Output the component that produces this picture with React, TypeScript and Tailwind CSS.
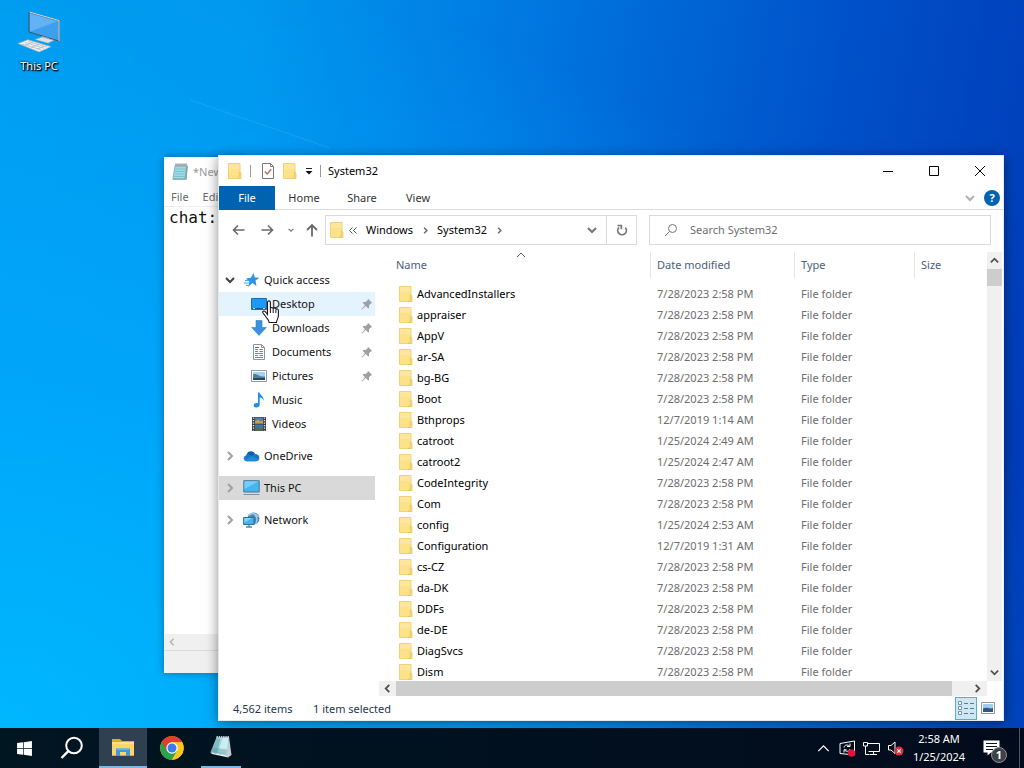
import { useState } from "react";
import type { ReactNode } from "react";
import { FaWindows } from "react-icons/fa";

const files = [
  { name: "AdvancedInstallers", date: "7/28/2023 2:58 PM" },
  { name: "appraiser", date: "7/28/2023 2:58 PM" },
  { name: "AppV", date: "7/28/2023 2:58 PM" },
  { name: "ar-SA", date: "7/28/2023 2:58 PM" },
  { name: "bg-BG", date: "7/28/2023 2:58 PM" },
  { name: "Boot", date: "7/28/2023 2:58 PM" },
  { name: "Bthprops", date: "12/7/2019 1:14 AM" },
  { name: "catroot", date: "1/25/2024 2:49 AM" },
  { name: "catroot2", date: "1/25/2024 2:47 AM" },
  { name: "CodeIntegrity", date: "7/28/2023 2:58 PM" },
  { name: "Com", date: "7/28/2023 2:58 PM" },
  { name: "config", date: "1/25/2024 2:53 AM" },
  { name: "Configuration", date: "12/7/2019 1:31 AM" },
  { name: "cs-CZ", date: "7/28/2023 2:58 PM" },
  { name: "da-DK", date: "7/28/2023 2:58 PM" },
  { name: "DDFs", date: "7/28/2023 2:58 PM" },
  { name: "de-DE", date: "7/28/2023 2:58 PM" },
  { name: "DiagSvcs", date: "7/28/2023 2:58 PM" },
  { name: "Dism", date: "7/28/2023 2:58 PM" },
];

/* ---------- icons ---------- */

function Chevron({ dir, size = 10, className = "text-[#505050]", width = 2 }: { dir: "up" | "down" | "left" | "right"; size?: number; className?: string; width?: number }) {
  const paths = {
    up: "M1 7l4-4 4 4",
    down: "M1 3l4 4 4-4",
    left: "M7 1L3 5l4 4",
    right: "M3 1l4 4-4 4",
  };
  return (
    <svg width={size} height={size} viewBox="0 0 10 10" className={className} fill="none" stroke="currentColor" strokeWidth={width}>
      <path d={paths[dir]} />
    </svg>
  );
}

function FolderIcon() {
  return (
    <svg width="14" height="16" viewBox="0 0 14 16" className="shrink-0">
      <path d="M.5.5h11.5v15H.5z" fill="#fde28a" stroke="#efd276" />
      <path d="M1 1h10.500v5H1z" fill="#ffeaa5" opacity=".6" />
      <path d="M11.300 9l1.700 1v5.500H9.500l1.800-2z" fill="#fbdc80" stroke="#e6c25c" strokeWidth=".7" />
    </svg>
  );
}

function CheckDocIcon() {
  return (
    <svg width="14" height="16" viewBox="0 0 14 16" fill="none">
      <path d="M1.500.5h8l3 3v12h-11z" fill="#fff" stroke="#7d7473" />
      <path d="M9.500.5v3h3" stroke="#7d7473" />
      <path d="M3.800 8.500l2.400 2.400 4-4.600" stroke="#b0705c" strokeWidth="1.400" />
    </svg>
  );
}

function NotepadIcon() {
  return (
    <svg width="16" height="18" viewBox="0 0 16 18">
      <path d="M3 2.500h12.300L14 16.500H.8z" fill="#77bccb" stroke="#7fa7b2" strokeWidth=".7" />
      <path d="M3.500 4h10.300l-1.500 11H1.600z" fill="#9edbe5" />
      <path d="M3.500 6h9.500M3.200 8.500h9.500M2.800 11h9.500M2.400 13.500h9.500" stroke="#6db7c6" strokeWidth=".7" />
      <path d="M3 2.500h12.500" stroke="#e9eef0" strokeWidth="2" />
      <path d="M4 .5v3M6 .5v3M8 .5v3M10 .5v3M12 .5v3M14 .5v3" stroke="#555" strokeWidth=".9" />
      <path d="M15.300 3L14 16.700" stroke="#8a9ba0" strokeWidth="1" />
    </svg>
  );
}

function StarIcon() {
  return (
    <svg width="16" height="16" viewBox="0 0 16 16">
      <path d="M9.500 1l1.300 4.500 4.700.2-4 2.900 1 5.200-4.200-2.800L4.200 15l1.200-5.200L2 6.400l4.900-.7z" fill="#2b93df" />
      <path d="M1 8.500h4M0 11h5M2 13.500h3" stroke="#4ba6ea" strokeWidth="1" />
    </svg>
  );
}

function DesktopIcon() {
  return (
    <svg width="16" height="16" viewBox="0 0 16 16">
      <path d="M.5 2.500h15v11H.5z" fill="#1e98f5" stroke="#1670bd" />
      <path d="M1 12.500h14" stroke="#0e5da4" />
      <path d="M2 12.500h2M12 12.500h2" stroke="#b9e0ff" />
    </svg>
  );
}

function DownloadIcon() {
  return (
    <svg width="16" height="16" viewBox="0 0 16 16">
      <path d="M5 .5h6v7h4.300L8 15.500.7 7.500H5z" fill="#3a91dd" stroke="#2c7fca" strokeWidth=".6" />
    </svg>
  );
}

function DocumentIcon() {
  return (
    <svg width="16" height="16" viewBox="0 0 16 16" fill="none">
      <path d="M2.500.5h8l3 3v12h-11z" fill="#fff" stroke="#8798a5" />
      <path d="M10.500.5v3h3" stroke="#8798a5" />
      <path d="M4 5.500h3M8.500 5.500H12M4 7.500h3M8.500 7.500H12M4 9.500h8M4 11.500h3M8.500 11.500H12M4 13.500h8" stroke="#4a8fc6" />
      <path d="M4 3.500h4" stroke="#2f77b3" />
    </svg>
  );
}

function PictureIcon() {
  return (
    <svg width="16" height="16" viewBox="0 0 16 16">
      <path d="M.5 2.500h15v11H.5z" fill="#fff" stroke="#8d9aa3" />
      <path d="M2 4h12v8H2z" fill="#a4d2f2" />
      <path d="M2 6.500c4-2 5 2.500 12 2V12H2z" fill="#4f7f9b" />
      <path d="M2 10.500c4-1 8 0 12-.8V12H2z" fill="#24475c" />
    </svg>
  );
}

function MusicIcon() {
  return (
    <svg width="16" height="16" viewBox="0 0 16 16">
      <path d="M7 .5h1.600c.4 3 4.900 3.800 3.900 8.500-.3-2.200-1.900-3.300-3.800-3.500v7.200c0 1.700-1.500 2.800-3.200 2.800S2.700 14.600 2.700 13.400c0-1.700 2.200-2.900 4.300-2.300z" fill="#1e8fe8" />
    </svg>
  );
}

function VideoIcon() {
  return (
    <svg width="16" height="16" viewBox="0 0 16 16">
      <path d="M1 1h14v14H1z" fill="#3a3a3a" />
      <path d="M4 1.500h8v6H4z" fill="#4c7fb8" />
      <path d="M4 8.500h8v6H4z" fill="#3f74b5" />
      <path d="M4 5.500l3-2 2 2 3-1v3H4z" fill="#d2a23c" />
      <path d="M4 12.500l3-2 2 2 3-1v3H4z" fill="#51704a" />
      <path d="M2.500 1.500v13M13.500 1.500v13" stroke="#e8e8e8" strokeWidth="1.400" strokeDasharray="1.300 1.200" />
    </svg>
  );
}

function CloudIcon() {
  return (
    <svg width="17" height="16" viewBox="0 0 18 16">
      <path d="M3.500 7.500C4 4.500 6 3 8.400 3c2.200 0 3.800 1.200 4.500 3L8 10z" fill="#0f5fb0" />
      <path d="M4.200 13.500C2 13.500.8 12 .8 10.300c0-2 1.700-3.300 3.700-3.100L12 12z" fill="#1687d9" />
      <path d="M4 6.800c2-1 4 .2 5.500 1.200L13 6c2.500 0 4.300 1.600 4.300 3.800 0 2.200-1.500 3.700-3.600 3.700H4.400L2 12.500z" fill="#1b75c4" />
      <path d="M9.500 8l7.300 3.800c-.6 1-1.700 1.700-3.100 1.700H4.400c-1.200 0-2-.5-2.600-1.200z" fill="#2089d8" />
    </svg>
  );
}

function PcIcon() {
  return (
    <svg width="17" height="16" viewBox="0 0 17 16">
      <path d="M.8.700h15.400v11.300H.8z" fill="#48b4f0" stroke="#4d768f" />
      <path d="M1.500 1.300H15.500L1.500 9z" fill="#7accf8" />
      <path d="M.5 14.500h16" stroke="#7b98a8" />
    </svg>
  );
}

function NetworkIcon() {
  return (
    <svg width="17" height="16" viewBox="0 0 17 16">
      <circle cx="10.500" cy="6.500" r="6" fill="#4a86b2" />
      <path d="M6 3.500c3-3.500 7-2 9.500 1.500M10 1c4 3 5 7 2.500 11" stroke="#9fd0ea" fill="none" strokeWidth="1.300" />
      <path d="M.6 5.500h10.400v7H.6z" fill="#45b2ef" stroke="#28709e" />
      <path d="M1.300 6h8L1.300 10.500z" fill="#86d2f8" />
      <path d="M6 12.500V15M3 15h6" stroke="#4f86a6" strokeWidth="1.300" />
    </svg>
  );
}

function PinIcon() {
  return (
    <svg width="12" height="12" viewBox="0 0 12 12" className="text-[#9aa0a5]">
      <path d="M7 .8l4.200 4.200-1.300.4-1.900 1.900.1 2.400-.9.700-2.400-2.400L1 11.500l-.5-.4L4 7.200 1.600 4.800l.8-.8 2.300.1 1.900-1.900z" fill="currentColor" />
    </svg>
  );
}

function ThisPcLargeIcon() {
  return (
    <svg width="44" height="42" viewBox="0 0 44 42">
      <path d="M12 1l30 8.500v20.500L12 21z" fill="#3d9fef" stroke="#41525e" strokeWidth="1" />
      <path d="M13 2.500l27 8-27 10z" fill="#62b2f4" />
      <path d="M12.500 1l29.500 8.500v20.500" fill="none" stroke="#e0d8cc" strokeWidth="1" />
      <path d="M25 25l7 2v3l-7-2z" fill="#96a7b1" />
      <path d="M18 28.500l7-2.500 12 3.200-6 3z" fill="#dbe3e8" stroke="#94a5af" strokeWidth=".6" />
      <path d="M1 32.500l10-3.800 23 7L22 41z" fill="#f0f2f3" stroke="#a4afb6" strokeWidth=".7" />
      <path d="M5 33l19 5.800M8 31.500l19 5.800M11 30.300l19 5.800M8 34.500l8-3.500M14 36.500l8-3.200M20 38.300l7-3" stroke="#aab4ba" strokeWidth=".7" />
    </svg>
  );
}

function ExplorerTaskIcon() {
  return (
    <svg width="24" height="20" viewBox="0 0 24 20">
      <path d="M1 2h8l2 2h12v3H1z" fill="#e7a823" />
      <path d="M1 5h22v13.500H1z" fill="#fcd667" />
      <path d="M1 5h22v2H1z" fill="#ffe18a" />
      <path d="M5 19v-7.500h14V19h-4v-4H9v4z" fill="#4398dc" />
      <path d="M5 11.500h14l-1.500 1.500h-11z" fill="#6cb5ec" />
      <path d="M1 18.500h4M19 18.500h4M9.500 18.500h5" stroke="#e0a735" />
    </svg>
  );
}

function ChromeIcon() {
  return (
    <svg width="24" height="24" viewBox="0 0 24 24">
      <circle cx="12" cy="12" r="11.800" fill="#fbc116" />
      <path d="M12 12L1.780 6.100A11.800 11.800 0 0 0 12 23.800l5.100-8.900z" fill="#2da24c" />
      <path d="M1.780 6.100A11.800 11.800 0 0 1 22.220 6.100H12L6.900 14.900z" fill="#e33b2e" />
      <path d="M22.220 6.500H12v5l5.100 3.400L12 23.800A11.800 11.800 0 0 0 22.220 6.500z" fill="#fcc61f" />
      <circle cx="12" cy="12" r="5.700" fill="#fff" />
      <circle cx="12" cy="12" r="4.500" fill="#3a7ee8" />
    </svg>
  );
}

function NotepadTaskIcon() {
  return (
    <svg width="24" height="24" viewBox="0 0 24 24">
      <path d="M20 2l2.500 18-3.500 2.500L16.500 19z" fill="#c3ccce" />
      <path d="M7.500 2.500L20 2.200 17.500 21 1.500 17.500z" fill="#a9d9e0" />
      <path d="M7.500 3.500h4L8 18.500l-6-1.500z" fill="#6aa6b2" opacity=".6" />
      <path d="M14 3h5.500l-2 15.500-8.500-1.700z" fill="#cfeef2" opacity=".9" />
      <path d="M4 12.500l14 2-.7 5L1.500 17z" fill="#5b98a5" opacity=".45" />
      <path d="M1.500 17.500L17.500 20.500l2 2L3 19z" fill="#eef3f3" />
      <path d="M7.500 2h13" stroke="#eef2f3" strokeWidth="1.300" strokeDasharray="1.500 .7" />
    </svg>
  );
}

function HandCursor() {
  return (
    <svg width="18" height="24" viewBox="0 0 18 24">
      <path
        d="M5.500 14.500V2.500c0-1 .6-1.600 1.400-1.600s1.500.6 1.500 1.600v6.200c.2-1.700 2.700-1.600 2.800.2.300-1.300 2.600-1.200 2.700.6.400-1.100 2.500-.8 2.500 1v5c0 3.300-1.900 4.300-1.900 7H7.200c0-2.300-2.300-4-3.400-5.800-.8-1.400-2-2.600-2.900-3.900-.7-1.200.8-2.400 2.200-1.400z"
        fill="#fff"
        stroke="#1a1420"
        strokeWidth="1.100"
      />
      <path d="M8.400 8.500v4.500M11.200 9v4M13.900 9.800v3.200" stroke="#1a1420" />
    </svg>
  );
}

/* ---------- navigation pane ---------- */

function NavRow({ icon, label, arrow, child, pinned, active, hover }: { icon: ReactNode; label: string; arrow?: "down" | "right"; child?: boolean; pinned?: boolean; active?: boolean; hover?: boolean }) {
  return (
    <a
      href="#"
      className={`flex h-6 items-center gap-1 pr-[2px] ${child ? "pl-8" : "pl-[2px]"} ${active ? "bg-[#d9d9d9]" : ""} ${hover ? "bg-[#e5f3ff]" : ""}`}
    >
      {!child && (
        <span className="flex w-[18px] shrink-0 justify-center">
          {arrow && <Chevron dir={arrow} className={arrow === "down" ? "text-[#404040]" : "text-[#a0a0a0]"} />}
        </span>
      )}
      <span className={child ? "w-[17px] shrink-0" : "flex w-[17px] shrink-0 justify-center"}>{icon}</span>
      <span className="flex-1">{label}</span>
      {pinned && <PinIcon />}
    </a>
  );
}

function NavPane() {
  return (
    <nav className="w-[156px] shrink-0 pt-4 text-[#111]">
      <NavRow icon={<StarIcon />} label="Quick access" arrow="down" />
      <NavRow icon={<DesktopIcon />} label="Desktop" child pinned hover />
      <NavRow icon={<DownloadIcon />} label="Downloads" child pinned />
      <NavRow icon={<DocumentIcon />} label="Documents" child pinned />
      <NavRow icon={<PictureIcon />} label="Pictures" child pinned />
      <NavRow icon={<MusicIcon />} label="Music" child />
      <NavRow icon={<VideoIcon />} label="Videos" child />
      <div className="mt-2 flex flex-col gap-2">
        <NavRow icon={<CloudIcon />} label="OneDrive" arrow="right" />
        <NavRow icon={<PcIcon />} label="This PC" arrow="right" active />
        <NavRow icon={<NetworkIcon />} label="Network" arrow="right" />
      </div>
    </nav>
  );
}

/* ---------- explorer window ---------- */

function TitleBar() {
  return (
    <div className="flex h-[30px] shrink-0 items-center">
      <div className="flex items-center pl-[9px]">
        <FolderIcon />
        <span className="mx-2 h-3 w-px bg-[#999]" />
        <button aria-label="Properties" className="ml-[2px]"><CheckDocIcon /></button>
        <button aria-label="New folder" className="ml-2"><FolderIcon /></button>
        <button aria-label="Customize Quick Access Toolbar" className="ml-2">
          <svg width="8" height="8" viewBox="0 0 8 8">
            <path d="M1 1.500h6" stroke="#222" />
            <path d="M.5 4h7L4 7.500z" fill="#111" />
          </svg>
        </button>
        <span className="mx-[7px] h-3 w-px bg-[#999]" />
      </div>
      <span className="flex-1 text-black">System32</span>
      <button aria-label="Minimize" className="flex h-full w-[46px] items-center justify-center">
        <svg width="10" height="10" viewBox="0 0 10 10"><path d="M0 5.500h10" stroke="#000" /></svg>
      </button>
      <button aria-label="Maximize" className="flex h-full w-[46px] items-center justify-center">
        <svg width="10" height="10" viewBox="0 0 10 10"><path d="M.5.5h9v9h-9z" fill="none" stroke="#000" /></svg>
      </button>
      <button aria-label="Close" className="flex h-full w-[46px] items-center justify-center">
        <svg width="10" height="10" viewBox="0 0 10 10"><path d="M0 0l10 10M10 0L0 10" stroke="#000" /></svg>
      </button>
    </div>
  );
}

function Ribbon() {
  return (
    <div className="flex h-6 shrink-0 items-stretch border-b border-[#dadbdc] text-[#333]">
      <button className="-mb-px w-14 bg-[#0063b1] text-white">File</button>
      <button className="w-[58px]">Home</button>
      <button className="w-[58px]">Share</button>
      <button className="w-[54px]">View</button>
      <div className="flex flex-1 items-center justify-end gap-[9px] pr-[3px]">
        <button aria-label="Expand the Ribbon"><Chevron dir="down" className="text-[#b0b0b0]" /></button>
        <button aria-label="Help" className="flex size-4 items-center justify-center rounded-full bg-[#0063b1] font-bold text-white">?</button>
      </div>
    </div>
  );
}

function AddressBar({ query, setQuery }: { query: string; setQuery: (v: string) => void }) {
  return (
    <div className="flex h-[42px] shrink-0 items-center pr-3 pb-[2px]">
      <div className="flex w-[106px] shrink-0 items-center pl-[13px] text-[#6b6b6b]">
        <button aria-label="Back">
          <svg width="13" height="12" viewBox="0 0 13 12" fill="none" stroke="currentColor" strokeWidth="1.600"><path d="M12.500 6H1.500M6 1.500L1.500 6 6 10.500" /></svg>
        </button>
        <button aria-label="Forward" className="ml-4">
          <svg width="13" height="12" viewBox="0 0 13 12" fill="none" stroke="currentColor" strokeWidth="1.600"><path d="M.5 6h11M7 1.500L11.500 6 7 10.500" /></svg>
        </button>
        <button aria-label="Recent locations" className="ml-[14px]"><Chevron dir="down" size={6} className="text-[#777]" /></button>
        <button aria-label="Up" className="ml-[11px]">
          <svg width="14" height="14" viewBox="0 0 14 14" fill="none" stroke="currentColor" strokeWidth="1.800"><path d="M7 13.500V2M2 7l5-5 5 5" /></svg>
        </button>
      </div>
      <div className="flex h-[30px] flex-1 items-center border border-[#d9d9d9] pl-1 text-black">
        <FolderIcon />
        <span className="ml-[5px] flex w-[17px] justify-start">
          <svg width="8" height="7" viewBox="0 0 8 7" fill="none" stroke="#555"><path d="M3.500 .5l-3 3 3 3M7.500 .5l-3 3 3 3" /></svg>
        </span>
        <button className="w-[50px] text-left">Windows</button>
        <span className="ml-[6px]"><Chevron dir="right" size={7} className="text-[#666]" /></span>
        <button className="ml-[8px] w-[53px] text-left">System32</button>
        <span className="ml-[6px]"><Chevron dir="right" size={7} className="text-[#666]" /></span>
        <button aria-label="Previous locations" className="mr-[9px] ml-auto"><Chevron dir="down" className="text-[#777]" /></button>
        <button aria-label="Refresh" className="flex h-full w-[30px] items-center justify-center border-l border-[#d9d9d9]">
          <svg width="12" height="12" viewBox="0 0 12 12" fill="none" stroke="#777" strokeWidth="1.700">
            <path d="M9.300 3.600A4.300 4.300 0 1 1 3 3.400" />
            <path d="M1.500 1.500h3.800v3.800" />
          </svg>
        </button>
      </div>
      <label className="ml-3 flex h-[30px] w-[342px] items-center gap-3 border border-[#d9d9d9] pl-[14px]">
        <svg width="14" height="14" viewBox="0 0 14 14" fill="none" stroke="#777"><circle cx="8.500" cy="5.500" r="4" /><path d="M5.600 8.400L1 13" /></svg>
        <input
          aria-label="Search System32"
          value={query}
          onChange={(e) => setQuery(e.target.value)}
          placeholder="Search System32"
          className="min-w-0 flex-1 outline-none placeholder:text-[#6d6d6d]"
        />
      </label>
    </div>
  );
}

function FileList({ query }: { query: string }) {
  const rows = files.filter((f) => f.name.toLowerCase().includes(query.toLowerCase()));
  return (
    <div className="flex min-w-0 flex-1 flex-col pl-1">
      <div className="flex min-h-0 flex-1 pl-[3px]">
        <div className="relative min-w-0 flex-1 overflow-hidden">
          <div className="absolute -top-[2px] left-[134px]"><Chevron dir="up" className="text-[#555]" width={1} /></div>
          <table className="w-full table-fixed border-separate border-spacing-0 text-left">
            <colgroup>
              <col />
              <col className="w-[144px]" />
              <col className="w-[120px]" />
              <col className="w-[72px]" />
            </colgroup>
            <thead className="text-[#4c607a]">
              <tr className="h-[26px]">
                <th className="border-r border-[#e5e5e5] pl-[14px] font-normal">Name</th>
                <th className="border-r border-[#e5e5e5] pl-[6px] font-normal">Date modified</th>
                <th className="border-r border-[#e5e5e5] pl-[6px] font-normal">Type</th>
                <th className="pl-[6px] font-normal">Size</th>
              </tr>
            </thead>
            <tbody className="text-[#6d6d6d]">
              <tr aria-hidden="true" className="h-[5px]"><td colSpan={4} /></tr>
              {rows.map((f) => (
                <tr key={f.name} className="h-[21px]">
                  <td className="pl-[17px] text-black">
                    <div className="flex items-center gap-1"><FolderIcon />{f.name}</div>
                  </td>
                  <td className="pl-[6px]">{f.date}</td>
                  <td className="pl-[6px]">File folder</td>
                  <td />
                </tr>
              ))}
            </tbody>
          </table>
        </div>
        <div className="mr-px flex w-[15px] flex-col items-center bg-[#f0f0f0]">
          <button aria-label="Scroll up" className="flex h-[17px] items-center"><Chevron dir="up" size={9} /></button>
          <div className="h-[17px] w-full bg-[#cdcdcd]" />
          <button aria-label="Scroll down" className="mt-auto flex h-[18px] items-center"><Chevron dir="down" size={9} /></button>
        </div>
      </div>
      <div className="mr-4 flex h-[15px] shrink-0 items-center bg-[#f0f0f0]">
        <button aria-label="Scroll left" className="flex h-full w-[17px] items-center justify-center"><Chevron dir="left" size={9} /></button>
        <div className="h-full flex-1 bg-[#cdcdcd]" />
        <button aria-label="Scroll right" className="flex h-full w-[35px] items-center justify-end pr-[5px]"><Chevron dir="right" size={9} /></button>
      </div>
    </div>
  );
}

function StatusBar() {
  return (
    <div className="flex h-6 shrink-0 items-center pr-2 pl-[14px] text-[#26364d]">
      <span className="w-[80px] pt-[2px]">4,562 items</span>
      <span className="flex-1 pt-[2px]">1 item selected</span>
      <button aria-label="Details view" className="flex h-[23px] w-[22px] items-center justify-center border border-[#5aa9d6] bg-[#cce8f6]">
        <svg width="16" height="14" viewBox="0 0 16 14" fill="none" stroke="#65788a">
          <path d="M.5.5h3v3h-3zM.5 5.500h3v3h-3zM.5 10.500h3v3h-3z" fill="#fff" strokeWidth=".8" />
          <path d="M6 2.500h4M12 2.500h4M6 7.500h4M12 7.500h4M6 12.500h4M12 12.500h4" />
        </svg>
      </button>
      <button aria-label="Large icons view" className="ml-1">
        <svg width="14" height="12" viewBox="0 0 14 12">
          <path d="M.5.5h13v11H.5z" fill="#fff" stroke="#8d98a1" />
          <path d="M2 2h10v8H2z" fill="#9fcdf0" />
          <path d="M2 6.500c4-2 6 1 10-.5v4H2z" fill="#31587a" />
        </svg>
      </button>
    </div>
  );
}

function Explorer() {
  const [query, setQuery] = useState("");
  return (
    <section className="absolute top-[155px] right-5 bottom-[7px] left-[218px] flex flex-col border border-[#e3eaf0] bg-white shadow-[0_2px_12px_rgba(0,0,0,0.45)]">
      <TitleBar />
      <Ribbon />
      <AddressBar query={query} setQuery={setQuery} />
      <div className="flex min-h-0 flex-1">
        <NavPane />
        <FileList query={query} />
      </div>
      <StatusBar />
    </section>
  );
}

/* ---------- notepad window ---------- */

function Notepad() {
  return (
    <section className="absolute top-[157px] bottom-[55px] left-[164px] flex w-20 flex-col bg-white shadow-[0_0_8px_rgba(0,0,0,0.35)]">
      <div className="flex h-[30px] items-center gap-[5px] pl-2 text-[#999]">
        <NotepadIcon />
        <span>*New</span>
      </div>
      <div className="flex h-5 items-center gap-[14px] border-b border-[#eee] pl-[7px] text-[#6a6a6a]">
        <button>File</button>
        <button>Edit</button>
      </div>
      <textarea
        aria-label="Text editor"
        defaultValue="chat:"
        className="min-w-0 flex-1 resize-none pl-[5px] font-['DejaVu_Sans_Mono',monospace] text-[16px] leading-[22px] text-[#111] outline-none"
      />
      <div className="flex h-4 items-center bg-[#f0f0f0] pl-1"><Chevron dir="left" size={8} className="text-[#b5b5b5]" /></div>
      <div className="h-[23px] border-t border-[#dcdcdc] bg-[#f0f0f0]" />
    </section>
  );
}

/* ---------- taskbar ---------- */

function Taskbar() {
  return (
    <footer className="flex h-10 shrink-0 items-stretch bg-gradient-to-r from-[#001621] to-[#020b1c] text-white">
      <button aria-label="Start" className="flex w-12 items-center justify-center"><FaWindows size={17} /></button>
      <button aria-label="Search" className="flex w-12 items-center justify-center">
        <svg width="24" height="24" viewBox="0 0 24 24" fill="none" stroke="#fff" strokeWidth="2"><circle cx="14" cy="9.500" r="7.800" /><path d="M8.300 15.200L1.500 22" strokeWidth="2.400" /></svg>
      </button>
      <button aria-label="File Explorer" className="ml-[3px] flex w-12 items-center justify-center border-b-2 border-[#76b9ed] bg-[#2f4150]"><ExplorerTaskIcon /></button>
      <button aria-label="Google Chrome" className="ml-px flex w-12 items-center justify-center"><ChromeIcon /></button>
      <button aria-label="Notepad" className="mx-[5px] flex w-10 items-center justify-center border-b-2 border-[#76b9ed]"><NotepadTaskIcon /></button>
      <div className="ml-auto flex items-center">
        <button aria-label="Show hidden icons" className="flex w-6 justify-center"><Chevron dir="up" size={13} className="text-white" width={1} /></button>
        <button aria-label="Update status" className="flex w-6 justify-center">
          <svg width="17" height="17" viewBox="0 0 17 17" fill="none" stroke="#fff">
            <path d="M1 3.500L15.500 1v14L1 13.500z" />
            <path d="M5 7.500c.3-2.500 3.500-3.300 5.500-1.500M11 3.500V6.500H8M11 9c-.5 2.500-3.700 3-5.500 1M5 12.500V9.800h2.500" />
            <circle cx="12.500" cy="13" r="3.800" fill="#e81136" stroke="none" />
          </svg>
        </button>
        <button aria-label="Network" className="flex w-6 justify-center">
          <svg width="17" height="15" viewBox="0 0 17 15" fill="none" stroke="#fff">
            <path d="M4.500 2.500h12v8h-11M.5 1.500h4v3.500h-4zM2.500 5v8.500h4M10.500 10.500v3M7 13.500h7" />
          </svg>
        </button>
        <button aria-label="Volume muted" className="flex w-6 justify-center">
          <svg width="17" height="16" viewBox="0 0 17 16" fill="none">
            <path d="M1.500 5.500h2.500L8 2v11.500L4 10H1.500z" stroke="#fff" />
            <circle cx="12" cy="11" r="4.500" fill="#d9303d" />
            <path d="M10.300 9.300l3.400 3.400M13.700 9.300l-3.400 3.400" stroke="#fff" strokeWidth="1.200" />
          </svg>
        </button>
        <button className="flex w-16 flex-col items-center leading-[18px]">
          <span>2:58 AM</span>
          <span>1/25/2024</span>
        </button>
        <button aria-label="Notifications" className="relative flex h-10 w-10 items-center justify-center">
          <svg width="17" height="16" viewBox="0 0 17 16">
            <path d="M.5.500h16v12H8l-3.500 3v-3h-4z" fill="#fff" />
            <path d="M3 3.500h11M3 6.500h11M3 9.500h7" stroke="#0a1420" />
          </svg>
          <span className="absolute right-1 bottom-[5px] flex size-4 items-center justify-center rounded-full border border-[#8a9096] bg-[#3b4248] font-bold">1</span>
        </button>
        <button aria-label="Show desktop" className="ml-2 h-10 w-[5px] border-l border-[#4c5665]" />
      </div>
    </footer>
  );
}

export default function App() {
  return (
    <div className="flex h-screen w-full flex-col overflow-hidden font-['Noto_Sans','Open_Sans',sans-serif] text-[11px] leading-4">
      <main className="relative min-h-0 flex-1 overflow-hidden bg-[linear-gradient(100deg,#009cf0_0%,#0097ee_22%,#0078e0_46%,#0050c8_75%,#0038b4_100%)]">
        {/* soft light falling from the left edge */}
        <div className="absolute inset-0 bg-[radial-gradient(ellipse_at_0%_100%,rgba(0,186,255,0.9)_0%,rgba(0,170,255,0.7)_35%,rgba(0,160,255,0)_75%)]" />
        <svg className="absolute inset-0 size-full" viewBox="0 0 1024 728" preserveAspectRatio="none">
          <path d="M190 100L330 148" stroke="#5cc4ff" strokeWidth="1" opacity=".25" />
        </svg>
        <button className="absolute top-[11px] left-[2px] flex w-[74px] flex-col items-center text-white">
          <ThisPcLargeIcon />
          <span className="mt-[5px] [text-shadow:1px_1px_2px_#000,0_0_2px_#000,1px_1px_1px_#000]">This PC</span>
        </button>
        <Notepad />
        <Explorer />
        <div className="pointer-events-none absolute top-[300px] left-[262px]"><HandCursor /></div>
      </main>
      <Taskbar />
    </div>
  );
}
